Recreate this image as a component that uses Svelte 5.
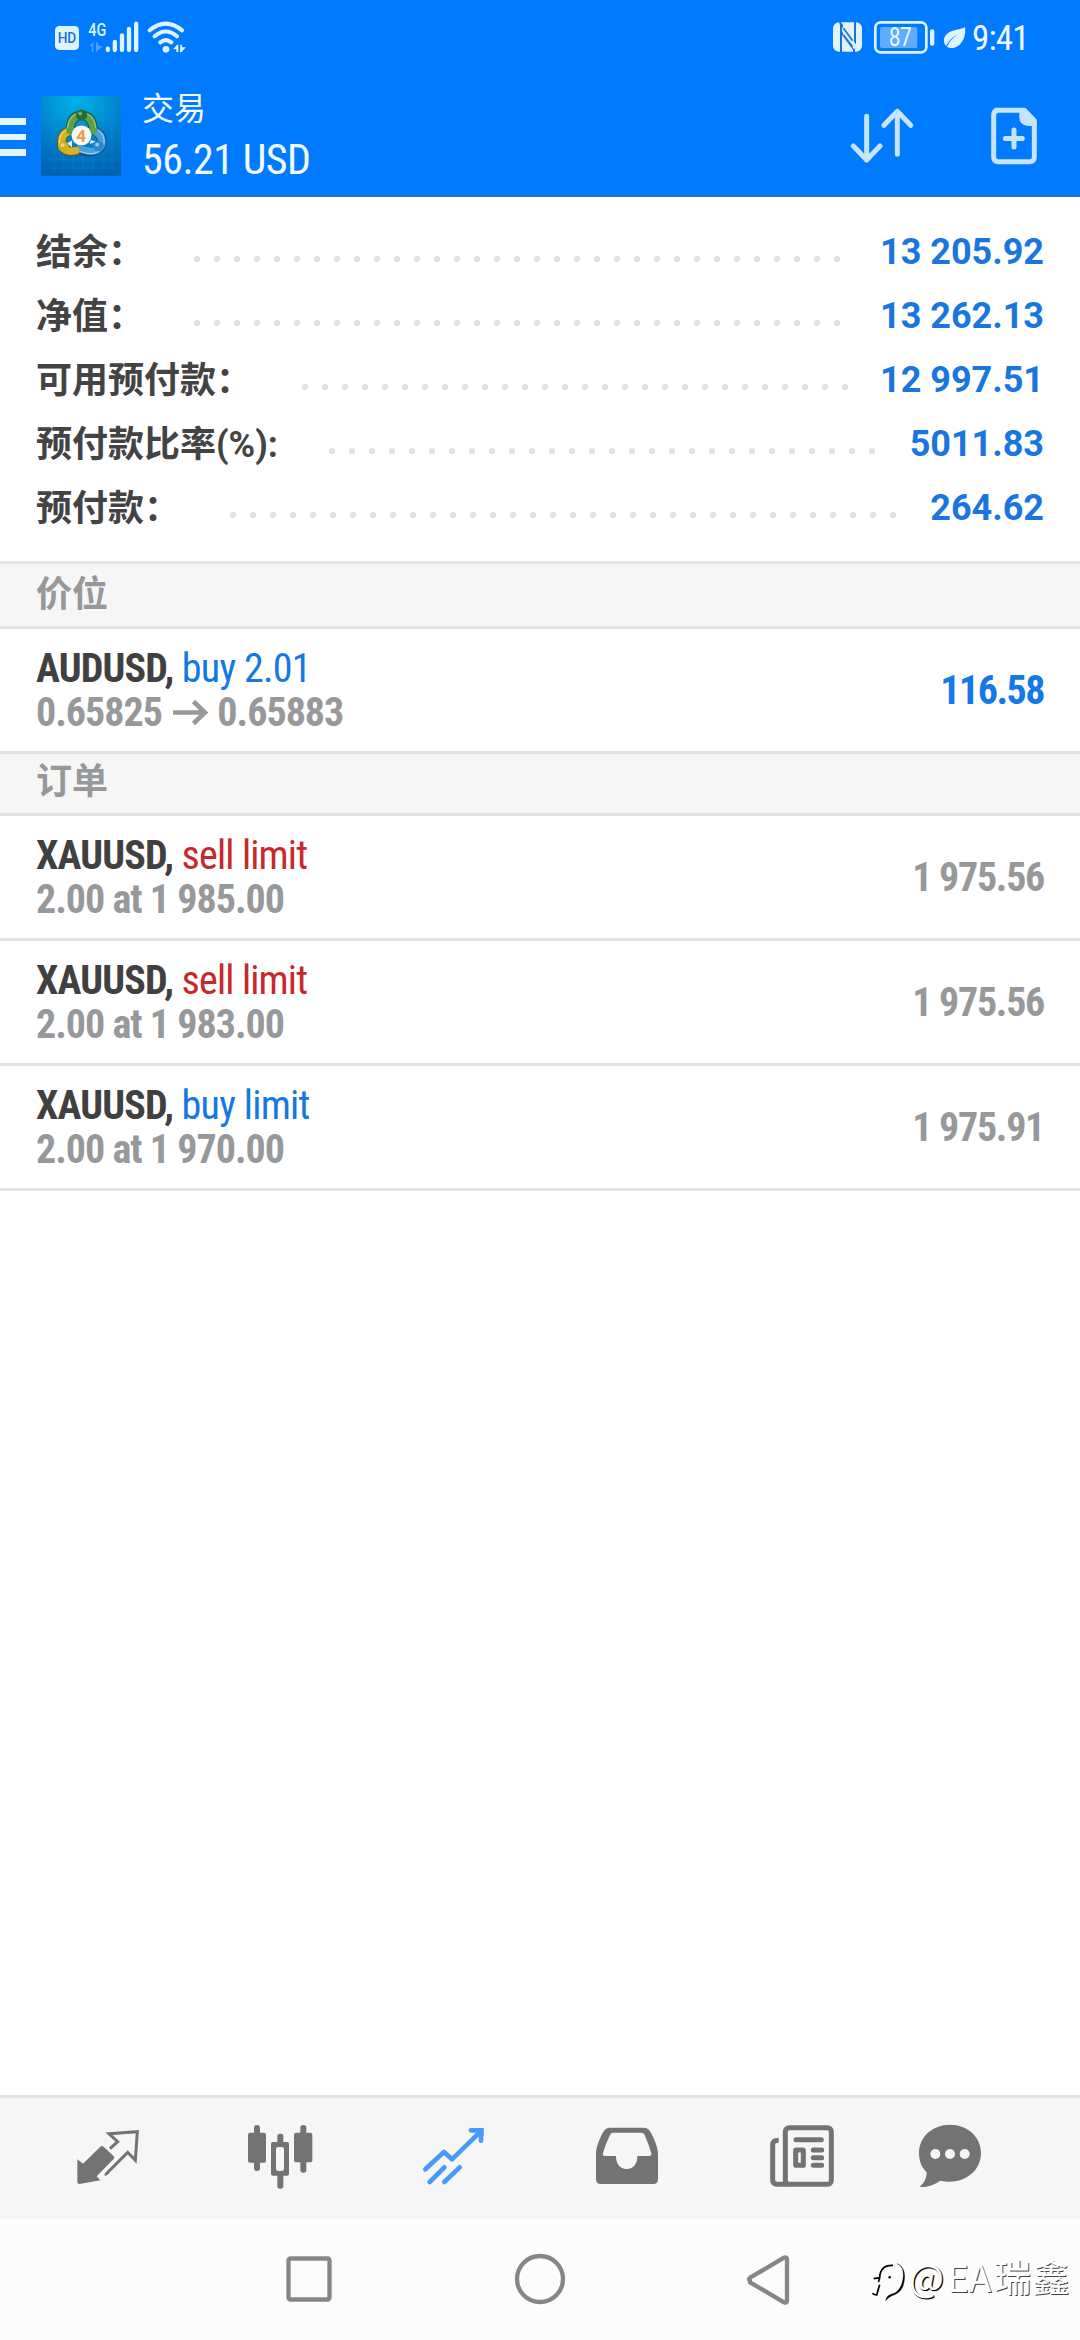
<script lang="ts">
  // Account summary; dots is the length of the leader between label and value
  const summary = [
    { label: '结余', suffix: '：', value: '13 205.92', dots: 33 },
    { label: '净值', suffix: '：', value: '13 262.13', dots: 33 },
    { label: '可用预付款', suffix: '：', value: '12 997.51', dots: 28 },
    { label: '预付款比率', suffix: '(%):', value: '5011.83', dots: 28 },
    { label: '预付款', suffix: '：', value: '264.62', dots: 34 },
  ];

  const positions = [
    { symbol: 'AUDUSD', side: 'buy', action: 'buy 2.01', open: '0.65825', current: '0.65883', profit: '116.58' },
  ];

  const orders = [
    { symbol: 'XAUUSD', side: 'sell', action: 'sell limit', detail: '2.00 at 1 985.00', price: '1 975.56' },
    { symbol: 'XAUUSD', side: 'sell', action: 'sell limit', detail: '2.00 at 1 983.00', price: '1 975.56' },
    { symbol: 'XAUUSD', side: 'buy', action: 'buy limit', detail: '2.00 at 1 970.00', price: '1 975.91' },
  ];
</script>

<div class="screen">
  <header>
    <!-- Status bar -->
    <div class="status">
      <svg class="signal" width="135" height="40" viewBox="159 54 405 120">
        <rect x="165" y="78" width="72" height="72" rx="13" fill="#dff3ff" />
        <text x="201" y="130" text-anchor="middle" font-size="42" font-weight="500" textLength="56" lengthAdjust="spacingAndGlyphs" fill="#1673d8">HD</text>
        <text x="265" y="107" font-size="56" font-weight="500" textLength="54" lengthAdjust="spacingAndGlyphs" fill="#dff3ff">4G</text>
        <path d="M268 138l12-12v30h-5v-18zM288 124v32l22-18h-12z" fill="#4ba2ff" />
        <g stroke="#dff3ff" stroke-width="13" stroke-linecap="round">
          <path d="M323.500 146v4M344.500 126v24M366 106v44M387 87v63M408.500 71v79" />
        </g>
        <g fill="none" stroke="#dff3ff" stroke-width="12" stroke-linecap="round">
          <path d="M449 91Q497 51 546 91M464 109Q497 80 531 109M481 127Q497 114 514 127" />
        </g>
        <circle cx="498" cy="148" r="10" fill="#dff3ff" />
        <path d="M519 148l12-14h4v22h-6v-9zM541 134l5 0v8h12l-14 15h-4z" fill="#dff3ff" />
      </svg>
      <div class="system">
        <svg width="137" height="50" viewBox="150 39 411 150">
          <rect x="159" y="67" width="87" height="88" rx="18" fill="#dff3ff" />
          <path d="M183 157V72l42 52V66M222 157v-8L185 98M183 75l-3-9" fill="none" stroke="#1673d8" stroke-width="6" />
          <path d="M189 70l33 42v36l-33-42z" fill="#dff3ff" />
          <path d="M190 84l28 38M190 104l28 36" stroke="#1673d8" stroke-width="5" />
          <rect x="286" y="67" width="153" height="90" rx="16" fill="none" stroke="#dff3ff" stroke-width="8" />
          <rect x="300" y="81" width="112" height="63" rx="5" fill="#5eabff" />
          <text x="361" y="139" text-anchor="middle" font-size="76" textLength="68" lengthAdjust="spacingAndGlyphs" fill="#eefaff">87</text>
          <rect x="450" y="88" width="13" height="49" rx="6" fill="#dff3ff" />
          <path d="M555 80C548 91 493 85 492 122c0 8 3 13 6 16 8-16 19-27 34-34-15 10-26 22-31 37 8 4 22 5 34-4C553 124 558 98 555 80z" fill="#dff3ff" />
        </svg>
        <span class="clock">9:41</span>
      </div>
    </div>

    <!-- App bar -->
    <div class="appbar">
      <div class="menu"><i></i><i></i><i></i></div>
      <svg class="logo" width="80" height="80" viewBox="123 288 241 240">
        <defs>
          <radialGradient id="sky" cx="0.45" cy="0" r="1">
            <stop offset="0" stop-color="#00b4ea" />
            <stop offset="0.5" stop-color="#0088d0" />
            <stop offset="1" stop-color="#0062b4" />
          </radialGradient>
        </defs>
        <rect x="123" y="288" width="241" height="240" fill="url(#sky)" />
        <path d="M163 300v215M192 300v215M221 300v215M250 300v215M279 300v215M308 300v215M337 300v215M135 330h218M135 360h218M135 480h218M135 505h218" stroke="#35b5ea" stroke-opacity="0.25" stroke-width="2" />
        <g fill="none" stroke-linecap="round">
          <path d="M210 392Q212 346 245 346T281 392" stroke="#24583c" stroke-width="28" />
          <path d="M281 392Q310 402 306 434Q292 466 240 450" stroke="#14507c" stroke-width="28" />
          <path d="M208 394Q183 400 185 434Q194 460 232 452" stroke="#5d5a24" stroke-width="28" />
          <path d="M281 392Q310 402 306 434Q292 466 240 446" stroke="#4a9fdc" stroke-width="22" />
          <path d="M208 394Q183 400 185 434Q194 460 228 452" stroke="#d3b524" stroke-width="22" />
          <path d="M210 392Q212 346 245 346T281 392" stroke="#59a04e" stroke-width="22" />
          <path d="M203 382Q208 340 245 339T288 382" stroke="#b5dc92" stroke-width="2.500" />
          <path d="M198 391Q177 402 179 430" stroke="#f3e584" stroke-width="3" />
          <path d="M296 391Q316 404 313 430M242 455Q276 468 296 455" stroke="#a5d9f8" stroke-width="3" />
        </g>
        <path d="M202 430l15-9-1 22zM270 432l18-7-15-5z" fill="#e7f2f0" />
        <circle cx="245" cy="345" r="17" fill="#286c35" />
        <circle cx="241" cy="340" r="6" fill="#6fb06c" />
        <circle cx="191" cy="440" r="16" fill="#d0ae1e" />
        <circle cx="188" cy="436" r="6" fill="#f3df70" />
        <circle cx="295" cy="438" r="16" fill="#2f86cc" />
        <circle cx="292" cy="434" r="6" fill="#8fcdf4" />
        <circle cx="245" cy="406" r="30" fill="#f7f8f3" />
        <text x="244" y="425" text-anchor="middle" font-size="52" font-weight="700" fill="#f29a4a">4</text>
      </svg>
      <div class="title">
        <span class="name">交易</span>
        <span class="total">56.21 USD</span>
      </div>
      <svg class="sort" width="64" height="60" viewBox="210 318 192 180" fill="none" stroke="#c6e3ff" stroke-width="15" stroke-linecap="round" stroke-linejoin="round">
        <path d="M260 349v131M220 438l40 42 40-42M352 463V334M312 376l40-42 40 42" />
      </svg>
      <svg class="add" width="50" height="60" viewBox="627 318 150 180">
        <path d="M648 331h85l30 31v108q0 15-15 15h-93q-14 0-14-15V346q0-15 14-15z" fill="none" stroke="#c6e3ff" stroke-width="15" stroke-linejoin="round" />
        <path d="M718 328h18l34 35v15h-27q-25-3-25-26z" fill="#c6e3ff" />
        <path d="M702 390v51M676 415.500h51" stroke="#c6e3ff" stroke-width="15" stroke-linecap="round" />
      </svg>
    </div>
  </header>

  <main>
    <section class="summary">
      {#each summary as row}
        <div class="line">
          <span class="label">{row.label}<span class:latin={row.suffix !== '：'}>{row.suffix}</span></span>
          <span class="leader" style="width: {row.dots * 20}px"></span>
          <span class="amount">{row.value}</span>
        </div>
      {/each}
    </section>

    <h2 class="first">价位</h2>
    {#each positions as p}
      <div class="item">
        <div>
          <div class="deal"><b>{p.symbol},</b> <span class={p.side}>{p.action}</span></div>
          <div class="detail">
            {p.open}
            <svg width="37" height="28" viewBox="0 0 37 28" fill="none" stroke="#97989a" stroke-width="4.600">
              <path d="M1 14.500h32M21.500 3.500l11.500 11-11.500 11" />
            </svg>
            {p.current}
          </div>
        </div>
        <span class="price profit">{p.profit}</span>
      </div>
    {/each}

    <h2>订单</h2>
    {#each orders as o}
      <div class="item">
        <div>
          <div class="deal"><b>{o.symbol},</b> <span class={o.side}>{o.action}</span></div>
          <div class="detail">{o.detail}</div>
        </div>
        <span class="price">{o.price}</span>
      </div>
    {/each}
  </main>

  <!-- Tab bar -->
  <nav class="tabs">
    <div class="tab">
      <svg viewBox="221 126 204 204">
        <path d="M231 238l17 13 52-51q5-4 10 0l30 29q4 4 0 8l-51 52 11 12-62 11q-7 0-7-7z" fill="#737373" />
        <path d="M329 206l23-21-26-24 85-6-6 86-23-24-57 57q-6 10-12 9" fill="none" stroke="#737373" stroke-width="9" />
      </svg>
    </div>
    <div class="tab">
      <svg viewBox="741 126 204 204" fill="#737373">
        <rect x="762" y="135" width="18" height="138" rx="8" />
        <rect x="744" y="158" width="54" height="90" rx="6" />
        <rect x="901" y="135" width="18" height="143" rx="8" />
        <rect x="882" y="158" width="55" height="89" rx="6" />
        <rect x="832" y="161" width="18" height="165" rx="8" />
        <rect x="813" y="186" width="54" height="101" rx="6" />
        <rect x="828" y="201" width="24" height="72" rx="7" fill="#f6f6f6" />
      </svg>
    </div>
    <div class="tab">
      <svg viewBox="1262 126 204 204" fill="none" stroke="#459bf7" stroke-width="14" stroke-linecap="round">
        <path d="M1275 268l56-52 24 22 86-84" stroke-linejoin="round" />
        <path d="M1288 306l44-44M1332 306l46-44" />
        <path d="M1412 151h30v31" />
        <path d="M1428 144h22v24z" fill="#459bf7" stroke="none" />
      </svg>
    </div>
    <div class="tab">
      <svg viewBox="102 126 204 204">
        <path fill-rule="evenodd" fill="#737373" d="M149 143h103q12 0 18 11c13 22 24 48 24 70v74q0 14-14 14H122q-14 0-14-14v-74c0-22 10-48 23-70q6-11 18-11zM159 158q-6 0-9 7-14 28-21 54-2 9 6 9h33c0 22 10 39 32 39s32-17 32-39h35q9 0 7-8-8-28-20-55-3-7-10-7z" />
      </svg>
    </div>
    <div class="tab">
      <svg viewBox="622 126 204 204" fill="none" stroke="#737373" stroke-width="15" stroke-linecap="round">
        <rect x="674" y="143" width="138" height="170" rx="12" />
        <path d="M654 181q-18 0-18 14v104q0 14 16 14h30" stroke-linecap="butt" />
        <path d="M706 179h76M758 210h25M758 233h25M758 256h25" />
        <rect x="705" y="210" width="23" height="46" rx="2" />
      </svg>
    </div>
    <div class="tab last">
      <svg viewBox="1065 126 204 204">
        <path d="M1167 134c52 0 93 36 93 85 0 61-60 97-122 83-18 12-43 22-62 18 14-11 21-26 21-43-16-16-23-35-23-58 0-49 41-85 93-85z" fill="#737373" />
        <g fill="#f6f6f6">
          <circle cx="1123" cy="222" r="15" />
          <circle cx="1167" cy="222" r="15" />
          <circle cx="1211" cy="222" r="15" />
        </g>
      </svg>
    </div>
  </nav>

  <!-- System navigation -->
  <footer>
    <svg width="520" height="60" viewBox="0 0 520 60" fill="none" stroke="#868686" stroke-width="4.300" stroke-linejoin="round">
      <rect x="8.500" y="10.500" width="41" height="41" rx="2" />
      <circle cx="260" cy="31" r="23" />
      <path d="M470 32.500q-2-1.500 0-2.800l34-20q3-1 3 1.800v41q0 3-3 1.800l-34-20z" />
    </svg>
    <div class="mark">
      <svg width="44" height="48" viewBox="25 60 132 144" fill="none">
        <path d="M42 122q9-2 18-3c1-24 13-38 40-37M60 120q-2 8-4 12M60 140l-9 31q-7-1-13-5" stroke="#000" stroke-width="5" />
        <path d="M112 77c20 8 22 30 16 55-5 18-14 32-31 36q-16 3-19 20q6-9 19-15c19-5 32-18 36-40c5-26 0-48-21-56z" fill="#000" stroke="#000" stroke-width="1" />
        <circle cx="90" cy="118" r="4" fill="#000" />
      </svg>
      <span class="at">@</span><span class="ea">EA</span><span class="cn">瑞鑫</span>
    </div>
  </footer>
</div>

<style>
  :global(body) {
    margin: 0;
    background: #fff;
  }

  .screen {
    display: flex;
    flex-direction: column;
    width: 1080px;
    height: 2340px;
    overflow: hidden;
    background: #fff;
    font-family: Roboto, 'Noto Sans CJK SC', sans-serif;
  }

  svg {
    display: block;
    flex: none;
  }

  header {
    box-sizing: border-box;
    height: 197px;
    background: #007aff;
    border-bottom: 2px solid #1a73c4;
  }

  .status {
    display: flex;
    justify-content: space-between;
    box-sizing: border-box;
    height: 78px;
    padding: 13px 50px 0 53px;
  }

  .signal {
    margin-top: 5px;
  }

  .system {
    display: flex;
    width: 200px;
  }

  .clock {
    margin: 1px 0 0 5px;
    font-family: 'Roboto Condensed', Roboto, sans-serif;
    font-stretch: 75%;
    font-size: 35px;
    line-height: 50px;
    letter-spacing: -0.800px;
    color: #eefaff;
  }

  .appbar {
    display: flex;
    height: 117px;
  }

  .menu {
    display: flex;
    flex-direction: column;
    gap: 9px;
    width: 26px;
    margin: 40px 15px 0 0;
  }

  .menu i {
    height: 6.700px;
    background: #e4f5ff;
  }

  .logo {
    margin-top: 18px;
  }

  .title {
    display: flex;
    flex-direction: column;
    flex: 1;
    padding: 8px 0 0 21px;
    color: #f0faff;
  }

  .name {
    font-size: 32px;
    line-height: 46px;
  }

  .total {
    font-family: 'Roboto Condensed', Roboto, sans-serif;
    font-stretch: 75%;
    font-size: 42px;
    line-height: 56px;
    letter-spacing: -0.500px;
  }

  .sort {
    margin: 28px 75px 0 0;
  }

  .add {
    margin: 28px 41px 0 0;
  }

  main {
    flex: 1;
  }

  .summary {
    box-sizing: border-box;
    height: 367px;
    padding: 19px 36px 0;
    border-bottom: 3px solid #e4e4e4;
  }

  .line {
    display: flex;
    align-items: baseline;
    height: 64px;
    font-size: 36px;
    line-height: 64px;
    white-space: nowrap;
  }

  .label {
    position: relative;
    top: 1px;
    font-family: 'Noto Sans CJK SC', sans-serif;
    font-weight: 700;
    color: #434343;
  }

  .latin {
    margin-right: 1px;
    font-family: Roboto, sans-serif;
    font-weight: 700;
  }

  .leader {
    height: 10px;
    margin: 0 0 2px 43px;
    background: radial-gradient(circle, #e2e2e2 2.800px, transparent 3.500px) 0 0 / 20px 10px repeat-x;
  }

  .amount {
    margin-left: auto;
    font-weight: 700;
    color: #1976de;
  }

  h2 {
    box-sizing: border-box;
    height: 62px;
    margin: 0;
    padding: 0 36px;
    font-size: 36px;
    font-weight: 700;
    line-height: 56px;
    color: #97989a;
    background: #f6f6f6;
    border-bottom: 3px solid #e2e2e2;
  }

  .first {
    height: 65px;
    line-height: 62px;
  }

  .item {
    display: flex;
    justify-content: space-between;
    align-items: center;
    box-sizing: border-box;
    height: 125px;
    padding: 1px 36px 0;
    font-family: 'Roboto Condensed', Roboto, sans-serif;
    font-stretch: 75%;
    font-size: 40px;
    line-height: 44px;
    border-bottom: 3px solid #e2e2e2;
  }

  .deal {
    color: #404040;
    letter-spacing: -0.850px;
  }

  .buy {
    color: #1478e2;
    letter-spacing: -0.700px;
  }

  .sell {
    color: #c8282c;
  }

  .detail,
  .price {
    font-weight: 700;
    letter-spacing: -1px;
    color: #97989a;
  }

  .price {
    letter-spacing: -1.300px;
  }

  .detail svg {
    display: inline-block;
    margin: 0 0.500px 0 1.500px;
  }

  .price.profit {
    color: #1478e8;
    letter-spacing: -1.500px;
  }

  .tabs {
    display: flex;
    box-sizing: border-box;
    height: 124px;
    padding: 24px 0 0 21px;
    background: #f6f6f6;
    border-top: 3px solid #e4e4e4;
  }

  .tab {
    display: flex;
    justify-content: center;
    width: 173.500px;
  }

  .tab svg {
    width: 68px;
    height: 68px;
  }

  .last {
    width: 122px;
  }

  footer {
    display: flex;
    box-sizing: border-box;
    height: 121px;
    padding: 29px 0 0 280px;
    background: #fcfcfc;
  }

  .mark {
    display: flex;
    margin: -1px 0 0 68px;
    font-family: 'Noto Sans CJK SC', sans-serif;
    font-size: 37px;
    font-weight: 400;
    line-height: 58px;
    color: #fff;
    text-shadow: 1px 1px 0 #444;
  }

  .mark svg {
    margin-top: 11px;
  }

  .at {
    width: 36px;
    margin-left: -3px;
    text-shadow: 1px 1px 0 #000, 1px 1px 1px #000;
  }

  .ea {
    width: 47px;
    margin-left: 2px;
  }

  .cn {
    letter-spacing: 1.500px;
  }
</style>
